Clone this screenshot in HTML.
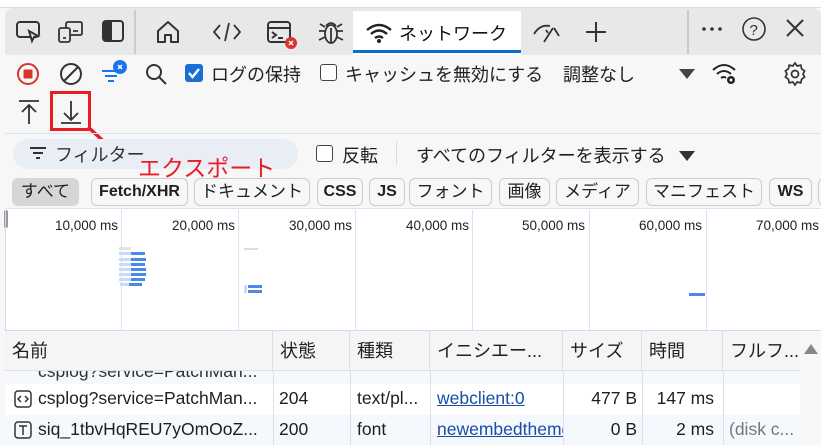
<!DOCTYPE html><html><head><meta charset="utf-8"><style>
*{box-sizing:border-box;margin:0;padding:0}
body{width:821px;height:445px;overflow:hidden;background:#f7f7f7;font-family:"Liberation Sans","Noto Sans CJK JP",sans-serif;color:#1f1f1f;position:relative;font-size:18px}
.a{position:absolute;white-space:nowrap}
.chip{position:absolute;top:178px;height:28px;border:1px solid #ccc;border-radius:6px;background:#f7f7f7;font-size:17px;line-height:26px;text-align:center;white-space:nowrap;overflow:hidden}
.lbl{position:absolute;top:218px;font-size:13.5px;color:#222;text-align:right;width:110px}
.vl{position:absolute;top:210px;height:120px;width:1px;background:#dbe4f3}
.hc{position:absolute;top:331px;height:40px;border-right:1px solid #d6e0f0;font-size:18px;line-height:40px;padding-left:7px;white-space:nowrap}
.cell{position:absolute;font-size:17.5px;white-space:nowrap;overflow:hidden}
svg{position:absolute}
</style></head><body>
<div class="a" style="left:0;top:0;width:821px;height:8px;background:#fff;border-bottom:1px solid #ddd"></div>
<div class="a" style="left:5px;top:8px;width:816px;height:47px;background:#e8e8e8;border-radius:8px 8px 0 0"></div>
<div class="a" style="left:134px;top:10px;width:2px;height:44px;background:#ccc"></div>
<div class="a" style="left:687px;top:10px;width:2px;height:44px;background:#ccc"></div>
<div class="a" style="left:353px;top:11px;width:168px;height:44px;background:#fff"></div>
<div class="a" style="left:353px;top:50px;width:168px;height:3px;background:#0a6fd0"></div>
<svg style="left:16px;top:20px" width="26" height="24" fill="none" stroke="#333" stroke-width="2"><rect x="1" y="2" width="22" height="15" rx="3"/><path d="M13 11l9 5-4 1-2 4z" fill="#e8e8e8"/></svg>
<svg style="left:58px;top:20px" width="26" height="24" fill="none" stroke="#333" stroke-width="1.8"><rect x="1" y="8" width="11" height="14" rx="2"/><path d="M8 8V4q0-2 2-2h12q2 0 2 2v9q0 2-2 2h-10"/><path d="M15 11h5M5 18h3"/></svg>
<svg style="left:102px;top:20px" width="22" height="22" fill="none" stroke="#333" stroke-width="2"><rect x="1" y="1" width="20" height="20" rx="3"/><rect x="2" y="2" width="7" height="18" fill="#333"/></svg>
<svg style="left:155px;top:20px" width="26" height="24" fill="none" stroke="#333" stroke-width="2"><path d="M3 11L13 2l10 9v11h-7v-7h-6v7H3z" stroke-linejoin="round"/></svg>
<svg style="left:212px;top:21px" width="30" height="22" fill="none" stroke="#333" stroke-width="1.8"><path d="M8 4L2 11l6 7M22 4l6 7-6 7M17 2l-4 18"/></svg>
<svg style="left:266px;top:20px" width="32" height="30" fill="none" stroke="#333" stroke-width="2"><rect x="2" y="2" width="22" height="20" rx="3"/><path d="M2 8h22M6 12l4 3-4 3M12 18h5"/><circle cx="25" cy="23" r="6" fill="#d8352a" stroke="none"/><path d="M23 21l4 4M27 21l-4 4" stroke="#fff" stroke-width="1.4"/></svg>
<svg style="left:317px;top:18px" width="28" height="28" fill="none" stroke="#333" stroke-width="1.8"><ellipse cx="14" cy="16" rx="6" ry="9"/><path d="M9 8q5-6 10 0M8 13H2M20 13h6M8 19l-6 3M20 19l6 3M8 9L3 6M20 9l5-3M14 10v15"/></svg>
<svg style="left:365px;top:22px" width="28" height="22" fill="none" stroke="#222" stroke-width="2.4"><path d="M2 8q12-10 24 0M6 12q8-7 16 0M10 16q4-3 8 0"/><circle cx="14" cy="19" r="2" fill="#222" stroke="none"/></svg>
<div class="a" style="left:399px;top:20px;font-size:18px;color:#111">ネットワーク</div>
<svg style="left:532px;top:22px" width="30" height="22" fill="none" stroke="#333" stroke-width="1.8"><path d="M2 12q6-10 16-8M22 6l5 8M12 20l9-14M14 8l2 3"/></svg>
<svg style="left:585px;top:21px" width="22" height="22" stroke="#333" stroke-width="2"><path d="M11 1v20M1 11h20"/></svg>
<svg style="left:701px;top:26px" width="22" height="6" fill="#333"><circle cx="3" cy="3" r="1.8"/><circle cx="11" cy="3" r="1.8"/><circle cx="19" cy="3" r="1.8"/></svg>
<svg style="left:741px;top:16px" width="26" height="26" fill="none" stroke="#333" stroke-width="1.6"><circle cx="13" cy="13" r="11"/><text x="8.5" y="19" font-size="15" fill="#333" stroke="none" font-family="Liberation Sans">?</text></svg>
<svg style="left:785px;top:18px" width="20" height="20" stroke="#333" stroke-width="2"><path d="M2 2l16 16M18 2L2 18"/></svg>
<svg style="left:16px;top:62px" width="24" height="24" fill="none"><circle cx="12" cy="12" r="10" stroke="#d8352a" stroke-width="2"/><rect x="7.5" y="7.5" width="9" height="9" rx="1" fill="#d8352a"/></svg>
<svg style="left:59px;top:62px" width="24" height="24" fill="none" stroke="#333" stroke-width="2"><circle cx="12" cy="12" r="10"/><path d="M5 19L19 5"/></svg>
<svg style="left:100px;top:60px" width="28" height="26" fill="none" stroke="#1a73e8" stroke-width="2"><path d="M2 11h18M5 16h12M8 21h6"/><circle cx="20" cy="7" r="7" fill="#1a73e8" stroke="none"/><path d="M18 5l4 4M22 5l-4 4" stroke="#fff" stroke-width="1.5"/></svg>
<svg style="left:144px;top:62px" width="24" height="24" fill="none" stroke="#333" stroke-width="2"><circle cx="10" cy="10" r="7"/><path d="M15 15l7 7"/></svg>
<div class="a" style="left:185px;top:64px;width:18px;height:18px;background:#1a6fd6;border-radius:3px"></div>
<svg style="left:185px;top:64px" width="18" height="18" fill="none" stroke="#fff" stroke-width="2.4"><path d="M4 9l3.5 4L14 5"/></svg>
<div class="a" style="left:211px;top:61px">ログの保持</div>
<div class="a" style="left:320px;top:64px;width:17px;height:17px;border:1.5px solid #444;border-radius:3px;background:#fff"></div>
<div class="a" style="left:345px;top:61px">キャッシュを無効にする</div>
<div class="a" style="left:563px;top:61px">調整なし</div>
<svg style="left:679px;top:69px" width="16" height="11"><path d="M0 0h16L8 10z" fill="#444"/></svg>
<svg style="left:711px;top:60px" width="28" height="28" fill="none" stroke="#222" stroke-width="2"><path d="M2 10q11-10 22 0M6 14q7-6 14 0M10 18q3-2 5 0"/><circle cx="20" cy="20" r="4" fill="#222" stroke="none"/><circle cx="20" cy="20" r="1.5" fill="#f7f7f7" stroke="none"/></svg>
<svg style="left:782px;top:61px" width="26" height="26" fill="none" stroke="#333" stroke-width="1.7"><path d="M13 2l2.2 3 3.6-.8.8 3.6 3 2.2-1.6 3 1.6 3-3 2.2-.8 3.6-3.6-.8L13 24l-2.2-3-3.6.8-.8-3.6-3-2.2 1.6-3-1.6-3 3-2.2.8-3.6 3.6.8z"/><circle cx="13" cy="13" r="3.5"/></svg>
<svg style="left:18px;top:99px" width="22" height="26" fill="none" stroke="#333" stroke-width="1.8"><path d="M1 2h20M11 25V6M4 13l7-7 7 7"/></svg>
<svg style="left:60px;top:99px" width="22" height="26" fill="none" stroke="#333" stroke-width="1.8"><path d="M1 24h20M11 2v19M4 14l7 7 7-7"/></svg>
<div class="a" style="left:50px;top:91px;width:41px;height:40px;border:3.5px solid #ea1c24"></div>
<svg style="left:85px;top:124px" width="45" height="40"><path d="M3 3l36 33" stroke="#ea1c24" stroke-width="3.5"/></svg>
<div class="a" style="left:5px;top:133px;width:816px;height:1px;background:#d8e3f3"></div>
<div class="a" style="left:13px;top:139px;width:285px;height:30px;border-radius:15px;background:#e9eef6"></div>
<svg style="left:29px;top:146px" width="18" height="14" stroke="#333" stroke-width="2"><path d="M1 2h16M4 7h10M7 12h4"/></svg>
<div class="a" style="left:55px;top:141px;color:#333">フィルター</div>
<div class="a" style="left:138px;top:149px;font-size:23px;color:#ea1c24">エクスポート</div>
<div class="a" style="left:316px;top:145px;width:17px;height:17px;border:1.5px solid #444;border-radius:3px;background:#fff"></div>
<div class="a" style="left:342px;top:142px">反転</div>
<div class="a" style="left:396px;top:141px;width:1px;height:24px;background:#cfdaea"></div>
<div class="a" style="left:416px;top:142px">すべてのフィルターを表示する</div>
<svg style="left:679px;top:151px" width="16" height="11"><path d="M0 0h16L8 10z" fill="#333"/></svg>
<div class="chip" style="left:12px;width:67px;background:#d6d6d6;border-color:#d6d6d6">すべて</div>
<div class="chip" style="left:91px;width:97px;font-weight:bold;font-size:16px">Fetch/XHR</div>
<div class="chip" style="left:194px;width:116px">ドキュメント</div>
<div class="chip" style="left:317px;width:46px;font-weight:bold;font-size:16px">CSS</div>
<div class="chip" style="left:369px;width:36px;font-weight:bold;font-size:16px">JS</div>
<div class="chip" style="left:409px;width:83px">フォント</div>
<div class="chip" style="left:499px;width:51px">画像</div>
<div class="chip" style="left:556px;width:83px">メディア</div>
<div class="chip" style="left:646px;width:116px">マニフェスト</div>
<div class="chip" style="left:769px;width:43px;font-weight:bold;font-size:16px">WS</div>
<div class="chip" style="left:818px;width:20px"></div>
<div class="a" style="left:5px;top:208px;width:816px;height:123px;background:#fff;border-top:1px solid #d8e3f3;border-bottom:1px solid #cddcf3"></div>
<div class="a" style="left:4px;top:210px;width:4px;height:18px;background:#999;border-radius:2px"></div>
<div class="a" style="left:5px;top:210px;width:1px;height:120px;background:#cddcf3"></div>
<div class="vl" style="left:121px"></div><div class="vl" style="left:238px"></div><div class="vl" style="left:355px"></div><div class="vl" style="left:472px"></div><div class="vl" style="left:589px"></div><div class="vl" style="left:706px"></div>
<div class="lbl" style="left:8px">10,000 ms</div><div class="lbl" style="left:125px">20,000 ms</div><div class="lbl" style="left:242px">30,000 ms</div><div class="lbl" style="left:359px">40,000 ms</div><div class="lbl" style="left:475px">50,000 ms</div><div class="lbl" style="left:592px">60,000 ms</div><div class="lbl" style="left:709px">70,000 ms</div>
<svg style="left:119px;top:246px" width="40" height="60"><g fill="#4a88ea"><rect x="12" y="6" width="14" height="3"/><rect x="12" y="12" width="15" height="3"/><rect x="12" y="17" width="14" height="3"/><rect x="12" y="22" width="15" height="3"/><rect x="12" y="27" width="15" height="3"/><rect x="12" y="32" width="14" height="3"/><rect x="10" y="37" width="13" height="3"/></g><g fill="#c9dbf7"><rect x="0" y="6" width="12" height="3"/><rect x="0" y="12" width="12" height="3"/><rect x="0" y="17" width="12" height="3"/><rect x="0" y="22" width="12" height="3"/><rect x="0" y="27" width="12" height="3"/><rect x="0" y="32" width="12" height="3"/><rect x="1" y="37" width="9" height="3"/></g><rect x="0" y="1" width="12" height="3" fill="#e4e4e4"/></svg>
<div class="a" style="left:244px;top:248px;width:14px;height:2px;background:#ddd"></div>
<div class="a" style="left:244px;top:285px;width:3px;height:8px;background:#c9dbf7"></div>
<div class="a" style="left:248px;top:285px;width:14px;height:3px;background:#4a88ea"></div>
<div class="a" style="left:248px;top:290px;width:14px;height:3px;background:#4a88ea"></div>
<div class="a" style="left:689px;top:293px;width:16px;height:3px;background:#4a88ea"></div>
<div class="a" style="left:5px;top:331px;width:795px;height:40px;background:#f5f5f5;border-bottom:1px solid #d6e0f0"></div>
<div class="hc" style="left:5px;width:268px">名前</div>
<div class="hc" style="left:273px;width:77px">状態</div>
<div class="hc" style="left:350px;width:80px">種類</div>
<div class="hc" style="left:430px;width:133px">イニシエー...</div>
<div class="hc" style="left:563px;width:79px">サイズ</div>
<div class="hc" style="left:642px;width:81px">時間</div>
<div class="hc" style="left:723px;width:77px;border:none;overflow:hidden">フルフ...</div>
<svg style="left:804px;top:343px" width="14" height="12"><path d="M0 11L7 1l7 10z" fill="#888"/></svg>
<div class="a" style="left:5px;top:371px;width:795px;height:13px;background:#f6f8fc;overflow:hidden"><div class="a" style="left:33px;top:-10px;font-size:17.5px;color:#333">csplog?service=PatchMan...</div></div>
<div class="a" style="left:5px;top:384px;width:795px;height:31px;background:#fff"></div>
<div class="a" style="left:5px;top:415px;width:795px;height:30px;background:#f5f8fd"></div>
<div class="a" style="left:273px;top:371px;width:1px;height:74px;background:#d6e0f0"></div>
<div class="a" style="left:350px;top:371px;width:1px;height:74px;background:#d6e0f0"></div>
<div class="a" style="left:430px;top:371px;width:1px;height:74px;background:#d6e0f0"></div>
<div class="a" style="left:563px;top:371px;width:1px;height:74px;background:#d6e0f0"></div>
<div class="a" style="left:642px;top:371px;width:1px;height:74px;background:#d6e0f0"></div>
<div class="a" style="left:723px;top:371px;width:1px;height:74px;background:#d6e0f0"></div>
<svg style="left:14px;top:390px" width="18" height="18" fill="none" stroke="#333" stroke-width="1.5"><rect x="1" y="1" width="16" height="16" rx="3"/><path d="M7 6l-3 3 3 3M11 6l3 3-3 3"/></svg>
<svg style="left:14px;top:421px" width="18" height="18" fill="none" stroke="#333" stroke-width="1.5"><rect x="1" y="1" width="16" height="16" rx="3"/><path d="M5 5h8M9 5v9"/></svg>
<div class="cell" style="left:38px;top:388px">csplog?service=PatchMan...</div>
<div class="cell" style="left:279px;top:388px">204</div>
<div class="cell" style="left:357px;top:388px">text/pl...</div>
<div class="cell" style="left:437px;top:388px;color:#174ea6;text-decoration:underline">webclient:0</div>
<div class="cell" style="left:563px;top:388px;width:74px;text-align:right">477 B</div>
<div class="cell" style="left:642px;top:388px;width:72px;text-align:right">147 ms</div>
<div class="cell" style="left:38px;top:419px">siq_1tbvHqREU7yOmOoZ...</div>
<div class="cell" style="left:279px;top:419px">200</div>
<div class="cell" style="left:357px;top:419px">font</div>
<div class="cell" style="left:437px;top:419px;width:126px;color:#174ea6;text-decoration:underline">newembedtheme</div>
<div class="cell" style="left:563px;top:419px;width:74px;text-align:right">0 B</div>
<div class="cell" style="left:642px;top:419px;width:72px;text-align:right">2 ms</div>
<div class="cell" style="left:729px;top:419px;width:71px;color:#777">(disk c...</div>
</body></html>
